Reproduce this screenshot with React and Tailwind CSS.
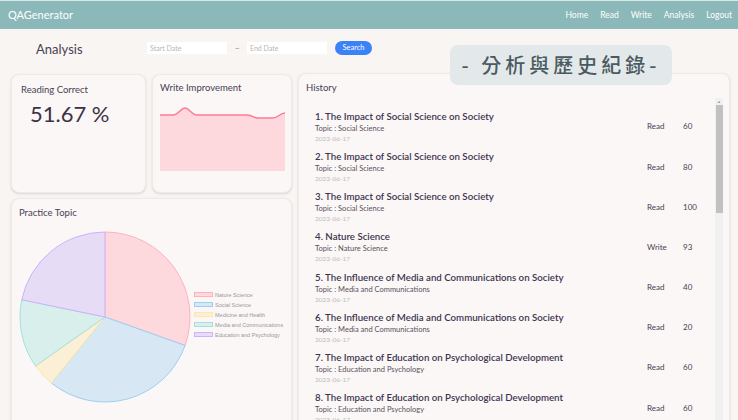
import React from 'react';

const topics = [
    { name: 'Nature Science', count: 7, fill: '#fdd9de', stroke: '#ffb1c1' },
    { name: 'Social Science', count: 7, fill: '#d7e7f4', stroke: '#9ad0f5' },
    { name: 'Medicine and Health', count: 1, fill: '#fbefd6', stroke: '#ffe6aa' },
    { name: 'Media and Communications', count: 3, fill: '#d9efec', stroke: '#a5dfdf' },
    { name: 'Education and Psychology', count: 5, fill: '#e7dcf5', stroke: '#ccb2ff' },
];

const history = [
    { title: 'The Impact of Social Science on Society', topic: 'Social Science', type: 'Read', score: 60 },
    { title: 'The Impact of Social Science on Society', topic: 'Social Science', type: 'Read', score: 80 },
    { title: 'The Impact of Social Science on Society', topic: 'Social Science', type: 'Read', score: 100 },
    { title: 'Nature Science', topic: 'Nature Science', type: 'Write', score: 93 },
    { title: 'The Influence of Media and Communications on Society', topic: 'Media and Communications', type: 'Read', score: 40 },
    { title: 'The Influence of Media and Communications on Society', topic: 'Media and Communications', type: 'Read', score: 20 },
    { title: 'The Impact of Education on Psychological Development', topic: 'Education and Psychology', type: 'Read', score: 60 },
    { title: 'The Impact of Education on Psychological Development', topic: 'Education and Psychology', type: 'Read', score: 60 },
];

function PieChart() {
    const total = topics.reduce((s, t) => s + t.count, 0);
    const cx = 86, cy = 86, r = 85;
    let start = -Math.PI / 2;
    return (
        <svg width="172" height="172" viewBox="0 0 172 172">
            {topics.map((t) => {
                const end = start + (t.count / total) * Math.PI * 2;
                const x1 = cx + r * Math.cos(start), y1 = cy + r * Math.sin(start);
                const x2 = cx + r * Math.cos(end), y2 = cy + r * Math.sin(end);
                const large = end - start > Math.PI ? 1 : 0;
                const d = `M${cx},${cy} L${x1},${y1} A${r},${r} 0 ${large} 1 ${x2},${y2} Z`;
                start = end;
                return <path key={t.name} d={d} fill={t.fill} stroke={t.stroke} strokeWidth="1" />;
            })}
        </svg>
    );
}

function WriteChart() {
    return (
        <svg width="126" height="66" viewBox="0 0 126 66">
            <path d="M0,10 L13,10 C18,10 21,3 25,3 C29,3 32,10 37,10 L87,10 C93,10 93,13 98,13 L113,13 C118,13 120,8 125,8 L125,66 L0,66 Z" fill="#fdd9de" />
            <path d="M0,10 L13,10 C18,10 21,3 25,3 C29,3 32,10 37,10 L87,10 C93,10 93,13 98,13 L113,13 C118,13 120,8 125,8" fill="none" stroke="#ff7a96" strokeWidth="1.5" />
        </svg>
    );
}

export default function App() {
    return (
        <div className="relative w-[738px] h-[420px] overflow-hidden bg-[#f8f5f3]" style={{ fontFamily: 'Lato, "Noto Sans", sans-serif' }}>
            {/* navbar */}
            <div className="h-[29px] bg-[#8bb8b8] border-t border-[#d8e6e6] flex items-center justify-between pl-[8px] pr-[6px]">
                <span className="text-white text-[11px]">QAGenerator</span>
                <div className="flex gap-[12px] text-white text-[8.5px]">
                    <span>Home</span>
                    <span>Read</span>
                    <span>Write</span>
                    <span>Analysis</span>
                    <span>Logout</span>
                </div>
            </div>

            {/* header row */}
            <div className="h-[44px] flex items-start pt-[11px]">
                <div className="w-[147px] pl-[36px] text-[13px] text-[#4a4052]">Analysis</div>
                <div className="flex items-center pt-[1px]">
                    <div className="w-[80px] h-[12px] bg-white text-[7px] text-[#b9b5b8] pl-[3px] flex items-center">Start Date</div>
                    <span className="w-[20px] text-center text-[8px] text-[#888]">~</span>
                    <div className="w-[80px] h-[12px] bg-white text-[7px] text-[#b9b5b8] pl-[3px] flex items-center">End Date</div>
                    <div className="ml-[8px] w-[37px] h-[14px] rounded-full bg-[#3b82f6] text-white text-[7.5px] flex items-center justify-center">Search</div>
                </div>
            </div>

            {/* main content */}
            <div className="flex gap-[6px] pl-[11px] pr-[8px]">
                <div className="w-[281px] flex flex-col gap-[5px] pt-[1px]">
                    <div className="flex gap-[6px]">
                        <div className="w-[135px] h-[119px] bg-[#faf7f6] border border-[#efe9e7] rounded-[8px] shadow-sm pl-[9px] pt-[8px]">
                            <div className="text-[9.5px] text-[#4a4052]">Reading Correct</div>
                            <div className="pl-[9px] mt-[6px] text-[22px] text-[#3b3148] leading-none">51.67 %</div>
                        </div>
                        <div className="w-[140px] h-[119px] bg-[#faf7f6] border border-[#efe9e7] rounded-[8px] shadow-sm pl-[7px] pt-[6px]">
                            <div className="text-[9.5px] text-[#4a4052]">Write Improvement</div>
                            <div className="mt-[10px]">
                                <WriteChart />
                            </div>
                        </div>
                    </div>
                    <div className="h-[230px] bg-[#faf7f6] border border-[#efe9e7] rounded-[8px] shadow-sm pl-[7px] pt-[7px]">
                        <div className="text-[9.5px] text-[#4a4052]">Practice Topic</div>
                        <div className="flex items-center mt-[11px]">
                            <PieChart />
                            <div className="ml-[3px] flex flex-col gap-[3px] mb-[5px]">
                                {topics.map((t) => (
                                    <div key={t.name} className="flex items-center gap-[2px] h-[7px]">
                                        <span className="w-[19px] h-[5px] border" style={{ background: t.fill, borderColor: t.stroke }} />
                                        <span className="text-[5.5px] text-[#999]" style={{ fontFamily: '"Liberation Sans", sans-serif' }}>{t.name}</span>
                                    </div>
                                ))}
                            </div>
                        </div>
                    </div>
                </div>

                <div className="flex-1 h-[360px] bg-[#faf7f6] border border-[#efe9e7] rounded-[8px] shadow-sm pl-[7px] pt-[7px] flex flex-col">
                    <div className="text-[9.5px] text-[#4a4052]">History</div>
                    <div className="flex mt-[8px] flex-1">
                        <div className="flex-1 flex flex-col pl-[9px] pt-[3px]">
                            {history.map((h, i) => (
                                <div key={i} className="h-[40.2px] flex items-center shrink-0">
                                    <div className="flex-1">
                                        <div className="text-[9.7px] font-semibold text-[#3e3450] leading-[13px]">{i + 1}. {h.title}</div>
                                        <div className="text-[7.5px] text-[#5a5060] leading-[11px]">Topic : {h.topic}</div>
                                        <div className="text-[6.5px] text-[#c0bbbd] leading-[9px]">2023-06-17</div>
                                    </div>
                                    <div className="w-[36px] text-[8px] text-[#4a4052]">{h.type}</div>
                                    <div className="w-[32px] text-[8px] text-[#4a4052]">{h.score}</div>
                                </div>
                            ))}
                        </div>
                        <div className="w-[8px] -mt-[5px] bg-[#f1f1f1] flex flex-col items-center mr-[6px]">
                            <span className="text-[4px] text-[#999] leading-[7px]">▲</span>
                            <div className="w-[7px] h-[108px] bg-[#c1c1c1]" />
                        </div>
                    </div>
                </div>
            </div>

            {/* overlay title badge */}
            <div className="absolute left-[450px] top-[45px] w-[222px] h-[40px] rounded-[8px] bg-[#e3e9ea] flex items-center justify-center text-[20px] tracking-[4px] text-[#4b5a61] font-medium" style={{ fontFamily: '"Noto Sans CJK TC", "Noto Sans", sans-serif' }}>
                - 分析與歷史紀錄-
            </div>
        </div>
    );
}
